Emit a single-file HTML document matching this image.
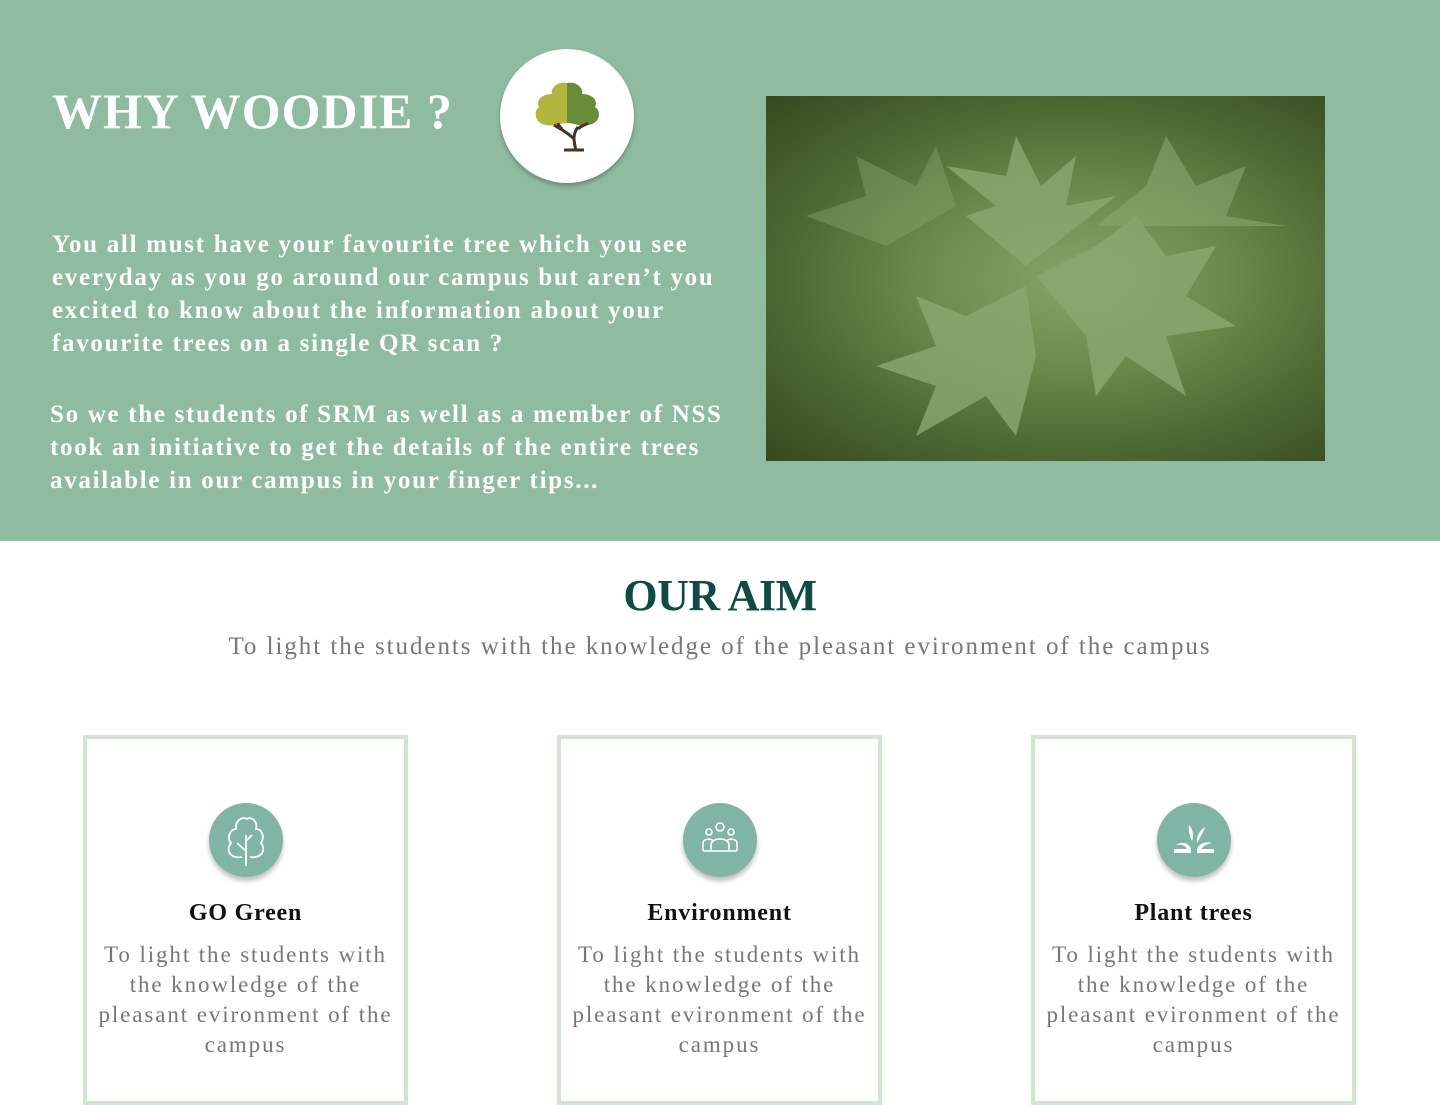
<!DOCTYPE html>
<html><head><meta charset="utf-8"><style>
*{margin:0;padding:0;box-sizing:border-box}
body{width:1440px;height:1086px;overflow:hidden;background:#fff;font-family:"Liberation Serif",serif;position:relative}
.top{position:absolute;left:0;top:0;width:1440px;height:541px;background:#8fbba0}
h1{position:absolute;left:52px;top:82px;color:#fff;font-size:50px;font-weight:bold;letter-spacing:1px}
.logo{position:absolute;left:500px;top:49px;width:134px;height:134px;border-radius:50%;background:#fff;box-shadow:0 3px 4px rgba(0,0,0,.25)}
.p{position:absolute;color:#fff;font-size:25px;font-weight:bold;line-height:33px;white-space:nowrap;letter-spacing:1.7px}
.photo{position:absolute;left:766px;top:96px;width:559px;height:365px;background:radial-gradient(ellipse at 55% 50%,#86a46a 0%,#6b8a4d 35%,#4d6a33 65%,#35491f 100%);overflow:hidden}
h2{position:absolute;left:0;width:1440px;top:570px;text-align:center;color:#0f4a45;font-size:44px;font-weight:bold;letter-spacing:-0.5px}
.sub{position:absolute;left:0;width:1440px;top:633px;text-align:center;color:#777;font-size:25px;letter-spacing:1.95px;white-space:nowrap}
.card{position:absolute;top:735px;width:325px;height:370px;border:4px solid #d0e6cf;text-align:center}
.ic{position:absolute;left:50%;top:64px;width:74px;height:74px;margin-left:-37px;border-radius:50%;background:#80b5a5;box-shadow:0 4px 5px rgba(0,0,0,.25)}
.card h3{position:absolute;left:0;width:100%;top:161px;font-size:24px;color:#111;font-weight:bold;letter-spacing:0.8px}
.card p{position:absolute;left:-10px;right:-10px;top:201px;font-size:23px;line-height:30px;color:#777;letter-spacing:1.9px;white-space:nowrap}
</style></head><body>
<div class="top"></div>
<h1>WHY WOODIE ?</h1>
<div class="logo"><svg width="134" height="134" viewBox="0 0 134 134">
<path d="M67 34 C57 32 50 40 52 45 C40 45 36 53 39 58 C33 62 35 75 46 76 C55 78 60 74 67 74 Z" fill="#b2b63f"/>
<path d="M67 34 C77 32 84 40 82 45 C94 45 98 53 95 58 C102 62 100 75 88 76 C79 78 74 74 67 74 Z" fill="#6a8b39"/>
<path d="M76 102 C74 92 72 86 78 78 M74 90 C66 82 60 80 54 76 M62 80 C60 78 58 76 58 74 M78 80 C82 76 86 76 88 74" stroke="#4a3225" stroke-width="3" fill="none"/>
<path d="M64 101 H84" stroke="#4a3225" stroke-width="3"/>
</svg></div>
<div class="p" style="left:52px;top:228px">You all must have your favourite tree which you see<br>everyday as you go around our campus but aren’t you<br>excited to know about the information about your<br>favourite trees on a single QR scan ?</div>
<div class="p" style="left:50px;top:398px">So we the students of SRM as well as a member of NSS<br>took an initiative to get the details of the entire trees<br>available in our campus in your finger tips...</div>
<div class="photo"><svg width="559" height="365" viewBox="0 0 559 365">
<g fill="#8aa870" opacity=".8">
<path d="M260 170 L200 120 L230 110 L180 70 L240 80 L250 40 L275 90 L310 60 L300 110 L350 100 Z"/>
<path d="M270 180 L330 150 L370 120 L400 160 L450 150 L420 200 L470 230 L400 240 L420 300 L360 260 L330 300 L320 240 Z"/>
<path d="M260 190 L200 220 L150 200 L170 250 L110 270 L170 290 L150 340 L220 300 L250 340 L270 260 Z"/>
<path d="M330 130 L380 90 L400 40 L430 90 L480 70 L460 120 L520 130 Z" opacity=".7"/>
<path d="M40 120 L100 100 L90 60 L150 90 L170 50 L190 110 L120 150 Z" opacity=".5"/>
</g></svg></div>
<h2>OUR AIM</h2>
<div class="sub">To light the students with the knowledge of the pleasant evironment of the campus</div>
<div class="card" style="left:83px"><div class="ic"><svg width="74" height="74" viewBox="0 0 74 74" fill="none" stroke="#fff" stroke-width="1.8"><path d="M37 63 V32 M37 48 L28 40 M37 38 L43 32 M33 54 C22 56 16 48 22 40 C17 34 22 26 27 26 C26 17 34 13 38 16 C43 13 49 19 47 26 C53 26 56 34 52 40 C58 48 51 56 41 54"/></svg></div><h3>GO Green</h3><p>To light the students with<br>the knowledge of the<br>pleasant evironment of the<br>campus</p></div>
<div class="card" style="left:557px"><div class="ic"><svg width="74" height="74" viewBox="0 0 74 74" fill="none" stroke="#fff" stroke-width="1.6"><circle cx="37" cy="24" r="4"/><circle cx="26" cy="29" r="3"/><circle cx="48" cy="29" r="3"/><path d="M28 48 V42 C28 34 46 34 46 42 V48 Z M20 48 V40 C20 36 28 35 30 38 M54 48 V40 C54 36 46 35 44 38 M20 48 H54"/></svg></div><h3>Environment</h3><p>To light the students with<br>the knowledge of the<br>pleasant evironment of the<br>campus</p></div>
<div class="card" style="left:1031px"><div class="ic"><svg width="74" height="74" viewBox="0 0 74 74" fill="#fff"><path d="M17 46 H34 V50 H17 Z M40 46 H57 V50 H40 Z M19 42 C25 38 32 40 34 46 L30 46 C28 42 24 41 19 42 Z M55 40 C48 38 42 41 40 46 L44 46 C46 43 50 41 55 40 Z M32 22 C36 26 37 32 35 38 C33 34 31 28 32 22 Z M48 24 C42 28 39 34 40 40 C43 35 46 30 48 24 Z"/></svg></div><h3>Plant trees</h3><p>To light the students with<br>the knowledge of the<br>pleasant evironment of the<br>campus</p></div>
</body></html>
